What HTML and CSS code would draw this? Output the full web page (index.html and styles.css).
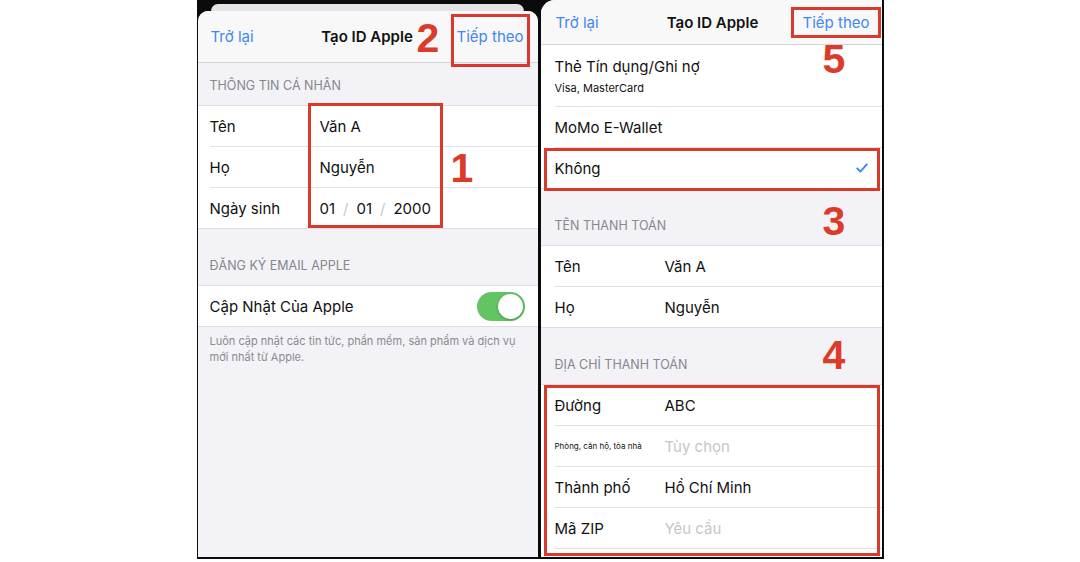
FILE: index.html
```html
<!DOCTYPE html>
<html lang="vi">
<head>
<meta charset="utf-8">
<title>Tạo ID Apple</title>
<link rel="stylesheet" href="styles.css">
</head>
<body>
<main class="shots">
  <section class="phone phone-left">
    <div class="stack-card"></div>
    <div class="sheet">
      <header class="nav nav-sheet">
        <span class="nav-link">Trở lại</span>
        <span class="nav-title">Tạo ID Apple</span>
        <span class="nav-link nav-next">Tiếp theo</span>
      </header>
      <div class="sec-head sec-head-short">THÔNG TIN CÁ NHÂN</div>
      <div class="group">
        <div class="row"><div class="row-inner"><span class="label">Tên</span><span class="value">Văn A</span></div></div>
        <div class="row"><div class="row-inner"><span class="label">Họ</span><span class="value">Nguyễn</span></div></div>
        <div class="row"><div class="row-inner"><span class="label">Ngày sinh</span><span class="value date"><span>01</span><span class="slash">/</span><span>01</span><span class="slash">/</span><span>2000</span></span></div></div>
      </div>
      <div class="sec-head sec-head-tall">ĐĂNG KÝ EMAIL APPLE</div>
      <div class="group">
        <div class="row"><div class="row-inner row-toggle"><span class="label-wide">Cập Nhật Của Apple</span><span class="toggle"><span class="knob"></span></span></div></div>
      </div>
      <p class="sec-foot">Luôn cập nhật các tin tức, phần mềm, sản phẩm và dịch vụ<br>mới nhất từ Apple.</p>
    </div>
    <div class="mark box box-next-left"></div>
    <div class="mark num num-2">2</div>
    <div class="mark box box-personal"></div>
    <div class="mark num num-1">1</div>
  </section>

  <section class="phone phone-right">
    <div class="screen">
      <header class="nav nav-screen">
        <span class="nav-link">Trở lại</span>
        <span class="nav-title">Tạo ID Apple</span>
        <span class="nav-link nav-next">Tiếp theo</span>
      </header>
      <div class="group group-flat">
        <div class="row row-card"><div class="row-inner row-stack"><span class="title">Thẻ Tín dụng/Ghi nợ</span><span class="sub">Visa, MasterCard</span></div></div>
        <div class="row"><div class="row-inner"><span class="label-wide">MoMo E-Wallet</span></div></div>
        <div class="row"><div class="row-inner row-check"><span class="label-wide">Không</span>
          <svg class="check" width="12" height="10" viewBox="0 0 12 10"><path d="M1.2 5.4 L4.4 8.6 L10.8 1.4" fill="none" stroke="#3d85f5" stroke-width="1.9" stroke-linecap="round" stroke-linejoin="round"/></svg>
        </div></div>
      </div>
      <div class="sec-head sec-head-tall">TÊN THANH TOÁN</div>
      <div class="group">
        <div class="row"><div class="row-inner"><span class="label">Tên</span><span class="value">Văn A</span></div></div>
        <div class="row"><div class="row-inner"><span class="label">Họ</span><span class="value">Nguyễn</span></div></div>
      </div>
      <div class="sec-head sec-head-mid">ĐỊA CHỈ THANH TOÁN</div>
      <div class="group">
        <div class="row"><div class="row-inner"><span class="label">Đường</span><span class="value">ABC</span></div></div>
        <div class="row"><div class="row-inner"><span class="label label-tiny">Phòng, căn hộ, tòa nhà</span><span class="value placeholder">Tùy chọn</span></div></div>
        <div class="row"><div class="row-inner"><span class="label">Thành phố</span><span class="value">Hồ Chí Minh</span></div></div>
        <div class="row"><div class="row-inner"><span class="label">Mã ZIP</span><span class="value placeholder">Yêu cầu</span></div></div>
        <div class="row row-cut"></div>
      </div>
    </div>
    <div class="mark box box-next-right"></div>
    <div class="mark num num-5">5</div>
    <div class="mark box box-none"></div>
    <div class="mark num num-3">3</div>
    <div class="mark num num-4">4</div>
    <div class="mark box box-address"></div>
  </section>
</main>
</body>
</html>
```

FILE: styles.css
```css
* { box-sizing: border-box; margin: 0; padding: 0; }

html, body { background: #ffffff; }

body {
  width: 1080px;
  height: 562px;
  overflow: hidden;
  font-family: Inter, "Noto Sans", "Liberation Sans", sans-serif;
  color: #111111;
  font-size: 15px;
}

.shots {
  display: flex;
  justify-content: center;
  height: 559px;
}

.phone {
  position: relative;
  background: #0b0b0b;
  display: flex;
  flex-direction: column;
}

.phone-left {
  width: 342px;
  padding: 4px 1px 2px 1px;
}

.phone-right {
  width: 345px;
  padding: 0 2px 2px 2px;
}

.stack-card {
  height: 7px;
  margin: 0 14px 0 13px;
  background: #e4e4e8;
  border-radius: 10px 10px 0 0;
}

.sheet {
  flex: 1;
  background: #f2f2f7;
  border-radius: 10px 10px 0 0;
  overflow: hidden;
}

.screen {
  flex: 1;
  background: #f2f2f7;
  border-top-left-radius: 14px;
  overflow: hidden;
}

/* nav bars */
.nav {
  display: grid;
  grid-template-columns: 1fr auto 1fr;
  align-items: center;
  background: #f8f8f8;
  border-bottom: 1px solid #d4d4d8;
}

.nav-sheet {
  height: 52px;
  padding: 0 14px 0 13px;
}

.nav-screen {
  height: 45px;
  padding: 0 12px 0 15px;
}

.nav-link {
  color: #3f87f5;
  font-size: 15px;
}

.nav-next { justify-self: end; }

.nav-title {
  font-weight: 600;
  font-size: 15px;
  color: #111111;
}

/* section headers */
.sec-head {
  display: flex;
  align-items: flex-end;
  padding: 0 0 12px 12px;
  font-size: 12.5px;
  line-height: 15px;
  color: #87878c;
}

.phone-right .sec-head { padding-left: 14px; }

.sec-head-short { height: 42px; }
.sec-head-tall { height: 56px; }
.sec-head-mid { height: 56px; }

.sec-foot {
  padding: 6px 10px 0 12px;
  font-size: 11px;
  line-height: 16px;
  color: #8b8b90;
}

/* groups and rows */
.group {
  background: #ffffff;
  border-top: 1px solid #dedee2;
}

.group-flat { border-top: 0; }

.row {
  height: 41px;
  padding-left: 12px;
  display: flex;
}

.phone-right .row { padding-left: 14px; }

.row:last-child {
  border-bottom: 1px solid #dedee2;
}

.row-inner {
  flex: 1;
  display: flex;
  align-items: center;
  border-bottom: 1px solid #e2e2e6;
}

.row:last-child .row-inner { border-bottom: 0; }

.row-card { height: 62px; }

.row-stack {
  flex-direction: column;
  align-items: flex-start;
  justify-content: flex-start;
  padding-top: 13px;
}

.title {
  font-size: 15px;
  line-height: 18px;
}

.sub {
  margin-top: 5px;
  font-size: 11px;
  line-height: 14px;
}

.label {
  width: 110px;
  flex: none;
  font-size: 15px;
}

.label-tiny {
  font-size: 8px;
}

.label-wide {
  flex: 1;
  font-size: 15px;
}

.value { font-size: 15px; }

.placeholder { color: #c5c5c9; }

.date .slash {
  color: #c9c9cd;
  margin: 0 8px;
}

.row-toggle { padding-right: 13px; }

.toggle {
  width: 48px;
  height: 29px;
  border-radius: 15px;
  background: #63c464;
  display: flex;
  align-items: center;
  justify-content: flex-end;
  padding-right: 2px;
}

.knob {
  width: 25px;
  height: 25px;
  border-radius: 50%;
  background: #ffffff;
  box-shadow: 0 1px 3px rgba(0, 0, 0, 0.25);
}

.row-check { padding-right: 14px; }

.row-cut {
  height: 8px;
  border-bottom: 0 !important;
}

/* annotations (overlay) */
.mark { position: absolute; }

.box {
  border: 3px solid #d93a2b;
}

.num {
  font-family: "Liberation Sans", Arial, sans-serif;
  font-weight: 700;
  font-size: 41px;
  line-height: 41px;
  color: #dc3b2a;
}

.box-next-left { left: 254px; top: 14px; width: 79px; height: 53px; }
.num-2 { left: 220px; top: 18px; }
.box-personal { left: 111px; top: 103px; width: 135px; height: 125px; }
.num-1 { left: 254px; top: 148px; }

.box-next-right { left: 252px; top: 7px; width: 90px; height: 31px; }
.num-5 { left: 284px; top: 39px; }
.box-none { left: 5px; top: 148px; width: 336px; height: 43px; }
.num-3 { left: 284px; top: 201px; }
.num-4 { left: 284px; top: 335px; }
.box-address { left: 5px; top: 385px; width: 336px; height: 171px; }
```
